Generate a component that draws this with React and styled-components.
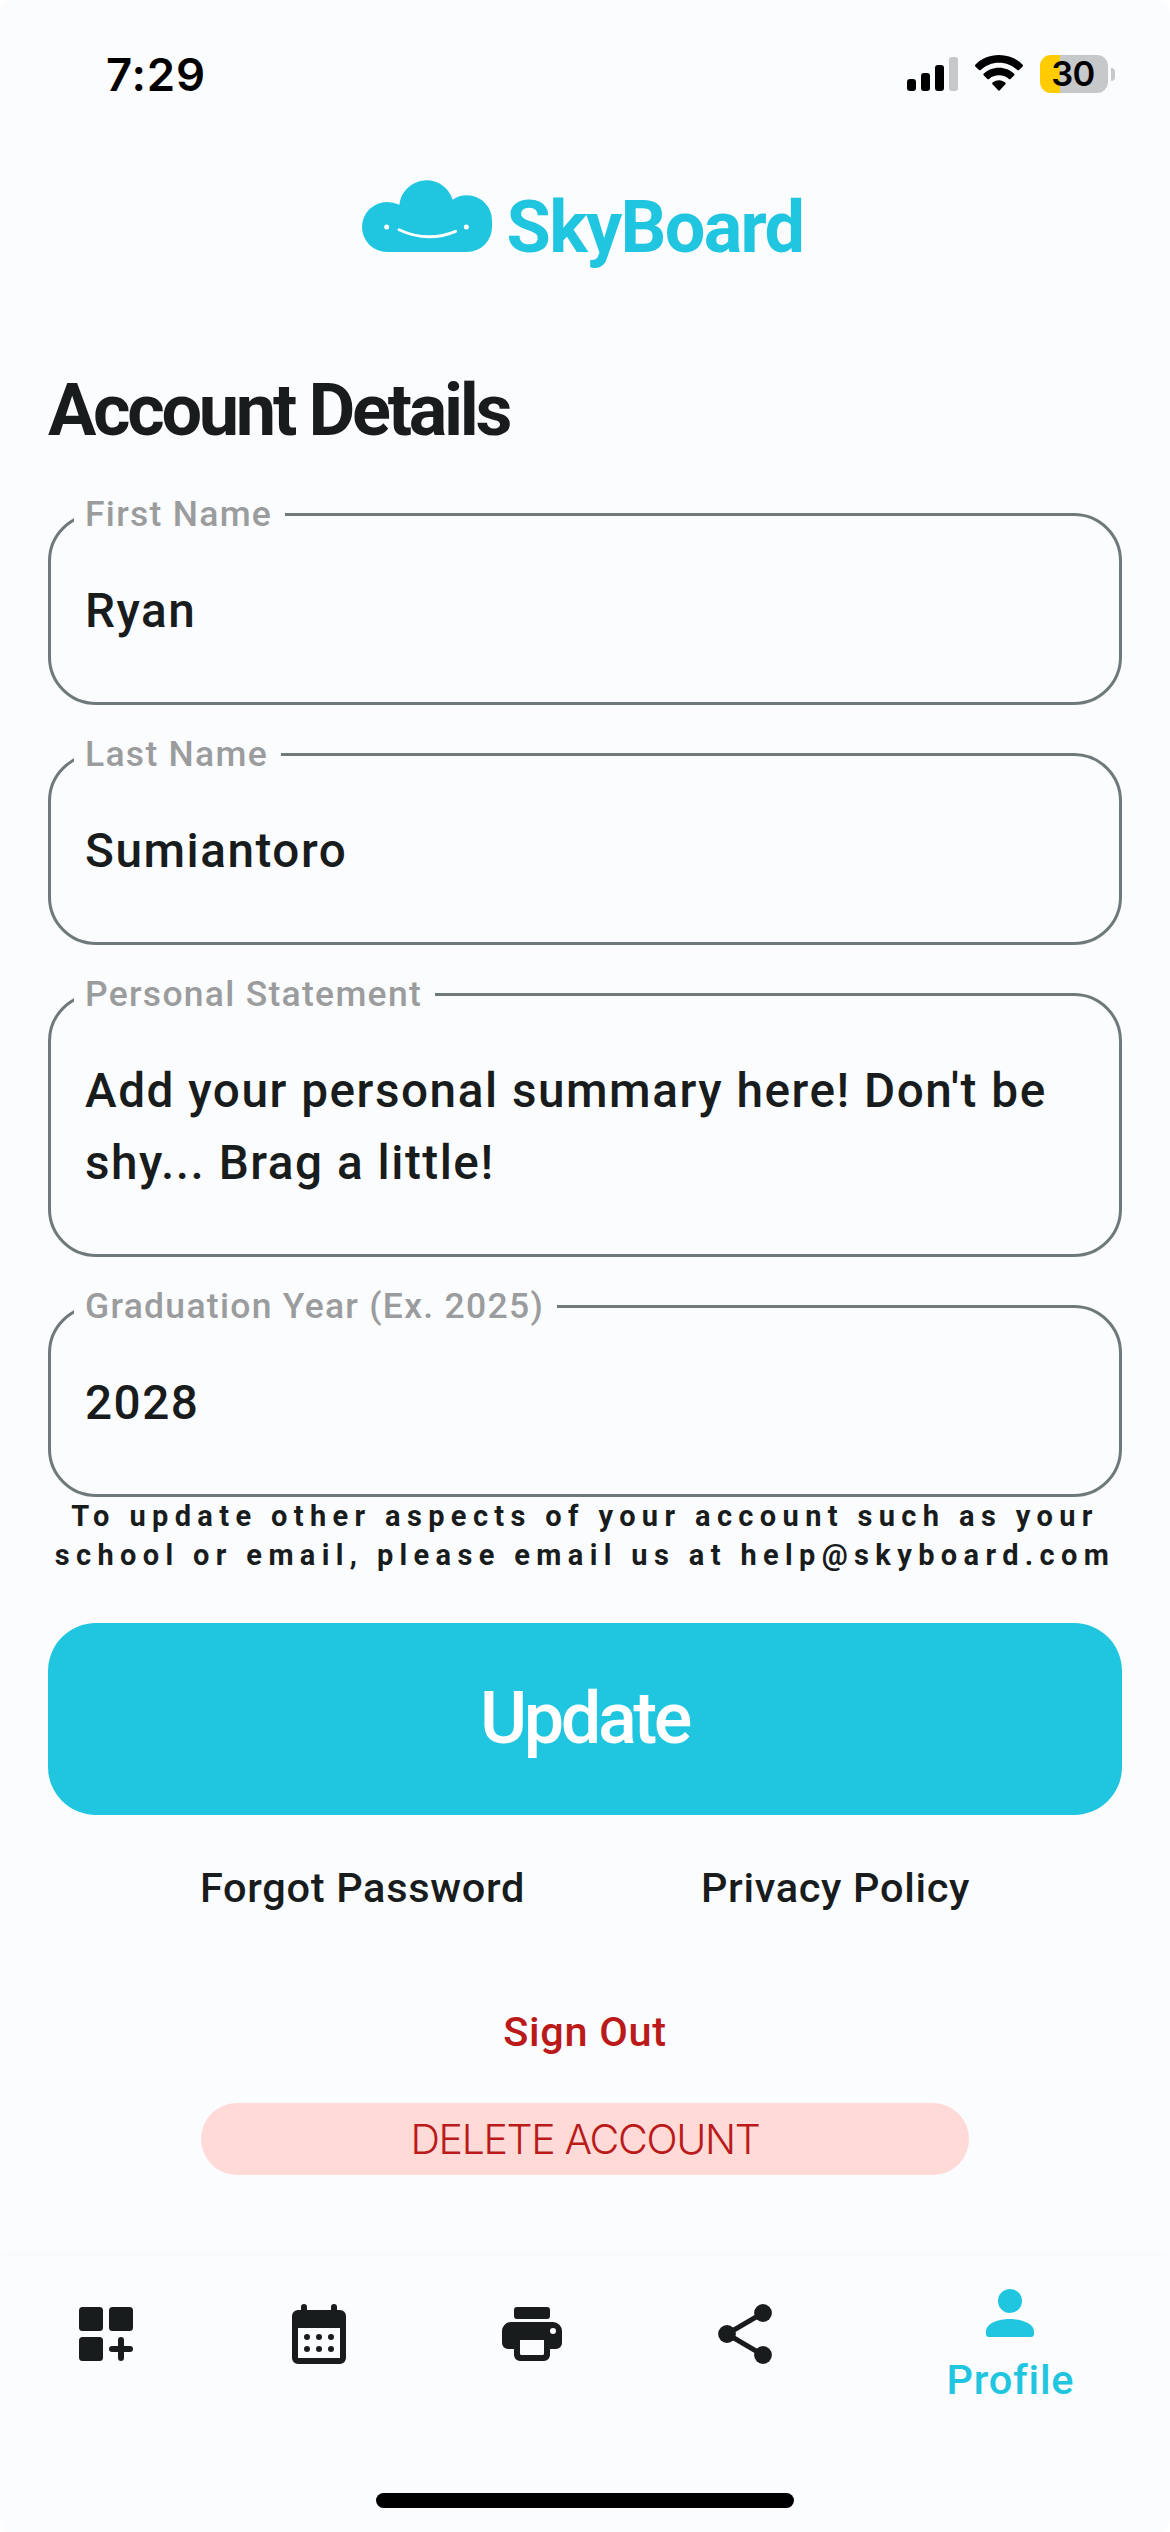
import React from "react";
import styled, { createGlobalStyle } from "styled-components";

const color = {
  surface: "#fbfcfe",
  ink: "#191c1d",
  outline: "#6f797b",
  label: "#9b9c9d",
  brand: "#20c5df",
  danger: "#ba1a1a",
  dangerSoft: "#ffdad7",
};

const GlobalStyle = createGlobalStyle`
  * { box-sizing: border-box; }
  body { margin: 0; background: #fff; }
  button { font: inherit; letter-spacing: inherit; color: inherit; border: 0; padding: 0; background: none; }
`;

const Screen = styled.div`
  width: 1170px;
  height: 2532px;
  display: flex;
  flex-direction: column;
  overflow: hidden;
  border-radius: 12px;
  background: ${color.surface};
  color: ${color.ink};
  font-family: Roboto, "Liberation Sans", sans-serif;
  font-weight: 470;
`;

const StatusBar = styled.div`
  height: 180px;
  padding: 55px 55px 0 106px;
  display: flex;
  align-items: flex-start;
  justify-content: space-between;
  color: #000;
  font-family: Inter, "Liberation Sans", sans-serif;
`;

const Clock = styled.div`
  font-size: 45.5px;
  line-height: 40px;
  font-weight: 570;
  letter-spacing: 0.8px;
`;

const StatusIcons = styled.div`
  display: flex;
  align-items: flex-start;
`;

const SignalIcon = styled.svg`
  width: 51px;
  height: 36px;
  margin-right: 17px;
`;

const WifiIcon = styled.svg`
  width: 48px;
  height: 36px;
  margin-right: 17px;
`;

const Battery = styled.div`
  width: 68px;
  height: 38px;
  border-radius: 11px;
  background: linear-gradient(to right, #ffcc00 20px, #c7c8ca 20px);
  font-size: 34.5px;
  line-height: 38px;
  font-weight: 640;
  letter-spacing: -0.5px;
  text-align: center;
  padding-right: 2px;
`;

const BatteryCap = styled.div`
  width: 4px;
  height: 13px;
  margin: 13px 0 0 3px;
  border-radius: 0 5px 5px 0;
  background: #c7c8ca;
`;

const Brand = styled.header`
  height: 183px;
  padding-right: 5px;
  display: flex;
  justify-content: center;
  align-items: flex-start;
  gap: 15px;
  color: ${color.brand};
`;

const Cloud = styled.svg`
  width: 130px;
  height: 72px;
`;

const BrandName = styled.div`
  font-size: 72px;
  line-height: 95px;
  font-weight: 680;
  letter-spacing: -1.7px;
`;

const Content = styled.main`
  flex: 1;
  padding: 0 48px;
  display: flex;
  flex-direction: column;
`;

const Title = styled.h1`
  margin: 0 0 54px;
  font-size: 72px;
  line-height: 96px;
  font-weight: 680;
  letter-spacing: -3.3px;
`;

const Fields = styled.div`
  display: flex;
  flex-direction: column;
  gap: 48px;
`;

const FieldBox = styled.label`
  position: relative;
  padding: 59px 34px 55px;
  border: 3px solid ${color.outline};
  border-radius: 48px;
`;

const FieldLabel = styled.span`
  position: absolute;
  left: 23px;
  top: -26px;
  padding: 0 13px 0 11px;
  background: ${color.surface};
  color: ${color.label};
  font-size: 35.5px;
  line-height: 48px;
  letter-spacing: 1.28px;
  white-space: nowrap;
`;

const FieldValue = styled.div`
  font-size: 47.7px;
  line-height: 72px;
  letter-spacing: 1.52px;
`;

const Note = styled.p`
  margin: 0 -10px;
  font-size: 29px;
  line-height: 39px;
  font-weight: 680;
  letter-spacing: 6.36px;
  text-align: center;
`;

const UpdateButton = styled.button`
  && {
    height: 192px;
    margin-top: 48px;
    padding-right: 1px;
    border-radius: 48px;
    background: ${color.brand};
    color: #fff;
    font-size: 72px;
    line-height: 84px;
    letter-spacing: -3.4px;
  }
`;

const Links = styled.div`
  display: flex;
  justify-content: center;
  gap: 176px;
  margin-top: 45px;
`;

const TextButton = styled.button`
  && {
    color: ${(p) => (p.$danger ? color.danger : color.ink)};
    font-size: 41.5px;
    line-height: 56px;
    letter-spacing: 0.68px;
  }
`;

const SignOut = styled(TextButton)`
  && {
    margin-top: 88px;
  }
`;

const DeleteButton = styled.button`
  && {
    align-self: center;
    width: 768px;
    height: 72px;
    margin-top: 43px;
    padding-top: 1px;
    border-radius: 36px;
    background: ${color.dangerSoft};
    color: ${color.danger};
    font-family: Inter, "Liberation Sans", sans-serif;
    font-weight: 350;
    font-size: 41px;
    line-height: 71px;
    letter-spacing: -1.35px;
  }
`;

const TabBar = styled.nav`
  height: 276px;
  display: grid;
  grid-template-columns: 2fr 2fr 2fr 2fr 3fr;
  grid-template-rows: 156px 1fr;
  background: ${color.surface};
  box-shadow: 0 -2px 8px rgba(0, 0, 0, 0.015);
`;

const Tab = styled.button`
  && {
    display: flex;
    flex-direction: column;
    align-items: center;
    justify-content: center;
    gap: 3px;
    padding-top: ${(p) => (p.$active ? "17px" : 0)};
    color: ${(p) => (p.$active ? color.brand : color.ink)};
    font-size: 41.5px;
    line-height: 56px;
    letter-spacing: 0.8px;
  }
`;

const TabIcon = styled.svg`
  width: 72px;
  height: 72px;
  flex: none;
  fill: currentColor;
`;

const HomeIndicator = styled.div`
  grid-column: 1 / -1;
  justify-self: center;
  width: 418px;
  height: 15px;
  margin-top: 81px;
  border-radius: 8px;
  background: #000;
`;

const GridIcon = () => (
  <TabIcon viewBox="0 0 72 72">
    <rect x="9" y="9" width="24" height="24" rx="3.5" />
    <rect x="39" y="9" width="24" height="24" rx="3.5" />
    <rect x="9" y="39" width="24" height="24" rx="3.5" />
    <path d="M51 42v18M42 51h18" stroke="currentColor" strokeWidth="6" strokeLinecap="round" />
  </TabIcon>
);

const CalendarIcon = () => (
  <TabIcon viewBox="0 0 72 72">
    <path d="M21 9v8M51 9v8" stroke="currentColor" strokeWidth="6" strokeLinecap="round" />
    <path
      fillRule="evenodd"
      d="M15 12h42a6 6 0 0 1 6 6v42a6 6 0 0 1-6 6H15a6 6 0 0 1-6-6V18a6 6 0 0 1 6-6zM15 30v30h42V30z"
    />
    {[39, 51].map((cy) => [24, 36, 48].map((cx) => <circle key={`${cx}-${cy}`} cx={cx} cy={cy} r="3" />))}
  </TabIcon>
);

const PrinterIcon = () => (
  <TabIcon viewBox="0 0 72 72">
    <rect x="18" y="9" width="36" height="12" rx="3" />
    <path
      fillRule="evenodd"
      d="M15 24h42a9 9 0 0 1 9 9v12a6 6 0 0 1-6 6h-6v6a6 6 0 0 1-6 6H24a6 6 0 0 1-6-6v-6h-6a6 6 0 0 1-6-6V33a9 9 0 0 1 9-9zM24 42v13.500a1.500 1.500 0 0 0 1.500 1.500h21a1.500 1.500 0 0 0 1.500-1.500V42zM57 30a3 3 0 1 0 0 6a3 3 0 0 0 0-6z"
    />
  </TabIcon>
);

const ShareIcon = () => (
  <TabIcon viewBox="0 0 72 72">
    <path d="M54 15L18 36l36 21" fill="none" stroke="currentColor" strokeWidth="5" />
    <circle cx="54" cy="15" r="8.900" />
    <circle cx="18" cy="36" r="8.900" />
    <circle cx="54" cy="57" r="8.900" />
  </TabIcon>
);

const ProfileIcon = () => (
  <TabIcon viewBox="0 0 72 72">
    <circle cx="36" cy="24" r="12" />
    <path d="M12 54.500C12 46.500 24 42 36 42s24 4.500 24 12.500V57a3 3 0 0 1-3 3H15a3 3 0 0 1-3-3z" />
  </TabIcon>
);

const fields = [
  { label: "First Name", value: "Ryan" },
  { label: "Last Name", value: "Sumiantoro" },
  { label: "Personal Statement", value: "Add your personal summary here! Don't be shy... Brag a little!" },
  { label: "Graduation Year (Ex. 2025)", value: "2028" },
];

export default function App() {
  return (
    <>
      <GlobalStyle />
      <Screen>
        <StatusBar>
          <Clock>7:29</Clock>
          <StatusIcons>
            <SignalIcon viewBox="0 0 51 36">
              <rect x="0" y="24" width="9" height="12" rx="3" />
              <rect x="14" y="18" width="9" height="18" rx="3" />
              <rect x="28" y="10" width="9" height="26" rx="3" />
              <rect x="42" y="2" width="9" height="34" rx="3" fill="#c7c8ca" />
            </SignalIcon>
            <WifiIcon viewBox="0 0 145 108">
              <path d="M72.500 0C101 0 126 11 144 29q2 3 0 5L133 45q-3 2-5 0C113 31 94 23 72.500 23S32 31 17 45q-2 2-5 0L1 34q-2-2 0-5C19 11 44 0 72.500 0z" />
              <path d="M72.500 38c18 0 34 7 46 18q2 3 0 5l-11 11q-3 2-5 0c-8-7-18-11-30-11s-22 4-30 11q-2 2-5 0L26 61q-2-2 0-5c12-11 28-18 46.500-18z" />
              <path d="M72.500 76c8 0 14 3 19 7q2 2 0 5L75 106q-2.500 2.500-5 0L53 88q-2-3 0-5c5-4 11-7 19.500-7z" />
            </WifiIcon>
            <Battery>30</Battery>
            <BatteryCap />
          </StatusIcons>
        </StatusBar>

        <Brand>
          <Cloud viewBox="65 59 390 216">
            <path
              fill="currentColor"
              d="M140 275a75 75 0 0 1 0-150q20 0 37 8A82 82 0 0 1 337 118q19-13 43-13a75 75 0 0 1 75 75v20a75 75 0 0 1-75 75z"
            />
            <circle cx="139" cy="200" r="7.500" fill="#fff" />
            <circle cx="378" cy="200" r="7.500" fill="#fff" />
            <path d="M176 208Q262 248 346 213" fill="none" stroke="#fff" strokeWidth="8.500" strokeLinecap="round" />
          </Cloud>
          <BrandName>SkyBoard</BrandName>
        </Brand>

        <Content>
          <Title>Account Details</Title>
          <Fields>
            {fields.map((f) => (
              <FieldBox key={f.label}>
                <FieldLabel>{f.label}</FieldLabel>
                <FieldValue>{f.value}</FieldValue>
              </FieldBox>
            ))}
          </Fields>
          <Note>
            To update other aspects of your account such as your
            <br />
            school or email, please email us at help@skyboard.com
          </Note>
          <UpdateButton>Update</UpdateButton>
          <Links>
            <TextButton>Forgot Password</TextButton>
            <TextButton>Privacy Policy</TextButton>
          </Links>
          <SignOut $danger>Sign Out</SignOut>
          <DeleteButton>DELETE ACCOUNT</DeleteButton>
        </Content>

        <TabBar>
          <Tab><GridIcon /></Tab>
          <Tab><CalendarIcon /></Tab>
          <Tab><PrinterIcon /></Tab>
          <Tab><ShareIcon /></Tab>
          <Tab $active>
            <ProfileIcon />
            Profile
          </Tab>
          <HomeIndicator />
        </TabBar>
      </Screen>
    </>
  );
}
